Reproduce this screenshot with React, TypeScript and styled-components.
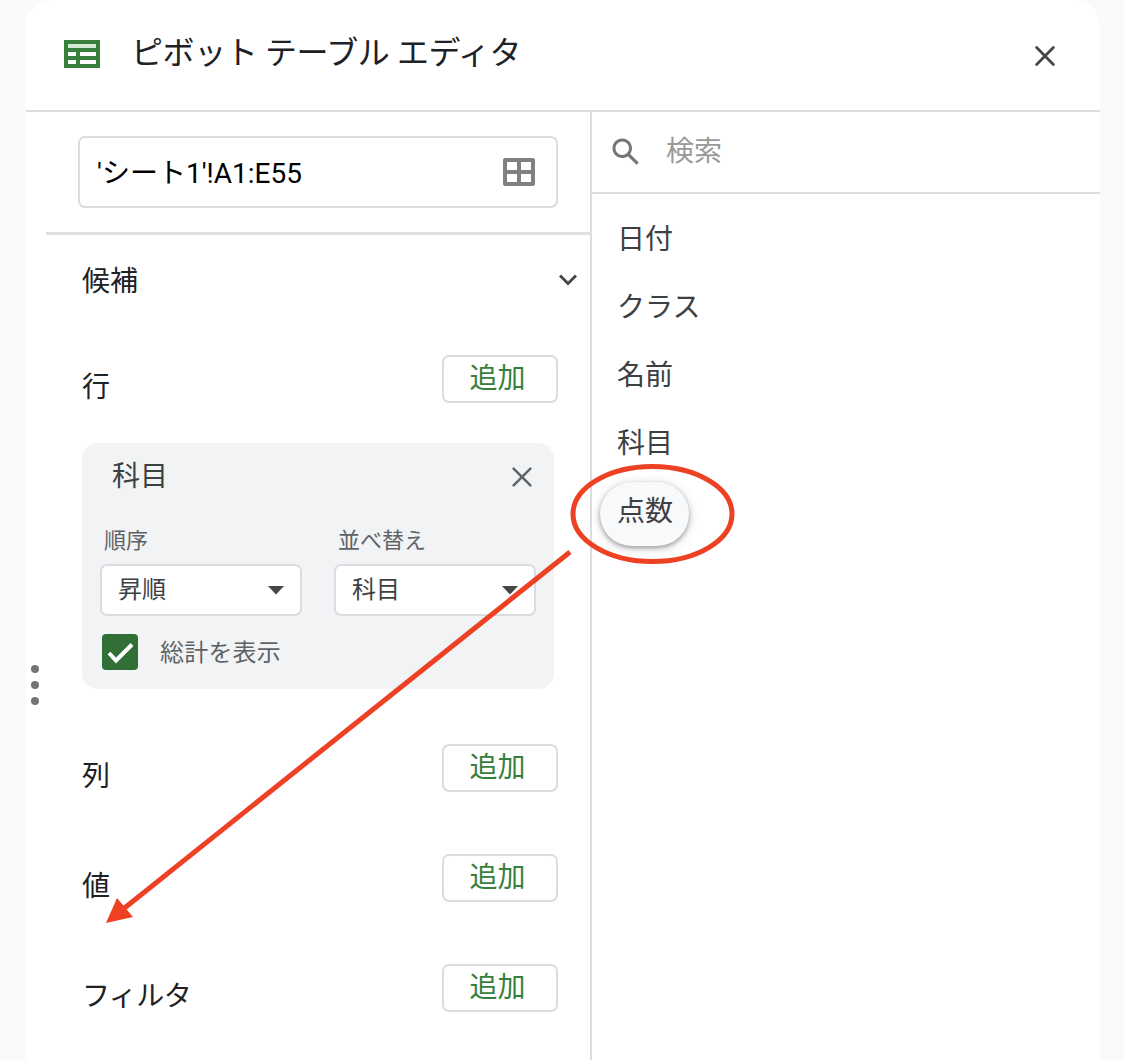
import React from 'react';
import styled, { createGlobalStyle } from 'styled-components';

const GlobalStyle = createGlobalStyle`
  *, *::before, *::after { box-sizing: border-box; }
  body {
    margin: 0;
    background: #f9fafc;
    font-family: Roboto, "Noto Sans CJK JP", sans-serif;
    color: #202124;
    overflow: hidden;
  }
`;

const Page = styled.div`
  position: relative;
  width: 1124px;
  height: 1060px;
  padding: 0 24px 0 26px;
  overflow: hidden;
`;

const Panel = styled.main`
  display: flex;
  flex-direction: column;
  height: 1060px;
  background: #fff;
  border-radius: 26px 26px 0 0;
`;

const Header = styled.header`
  display: flex;
  align-items: flex-start;
  height: 112px;
  padding: 0 44px 0 38px;
  border-bottom: 2px solid #dadce0;

  > svg:first-child { margin-top: 40px; }
  > svg:last-child { margin: 45px 0 0 auto; }
`;

const Title = styled.h1`
  margin: 31px 0 0 31px;
  font-size: 32px;
  font-weight: 400;
  line-height: 44px;
  letter-spacing: -0.4px;
  white-space: nowrap;
`;

const Body = styled.div`
  display: grid;
  grid-template-columns: 18px 546px 1fr;
  flex: 1;
`;

const Grip = styled.div`
  display: flex;
  flex-direction: column;
  align-items: center;
  gap: 8px;
  padding-top: 553px;
`;

const Dot = styled.span`
  width: 8px;
  height: 8px;
  border-radius: 50%;
  background: #757575;
`;

const Settings = styled.section`
  display: flex;
  flex-direction: column;
  padding-left: 2px;
  border-right: 2px solid #dadce0;
  width: 548px;
`;

const RangeArea = styled.div`
  height: 123px;
  padding: 24px 32px 0;
  border-bottom: 3px solid #e0e0e0;
`;

const RangeField = styled.div`
  display: flex;
  align-items: center;
  justify-content: space-between;
  width: 480px;
  height: 72px;
  padding: 0 21px 0 17px;
  border: 2px solid #dadce0;
  border-radius: 7px;
  font-size: 28px;
  line-height: 40px;
  color: #000;
`;

const RangeText = styled.span`
  padding-top: 4px;
`;

const Suggestions = styled.div`
  display: flex;
  align-items: center;
  justify-content: space-between;
  height: 90px;
  padding: 0 12px 0 36px;
  font-size: 28px;
  line-height: 40px;
`;

const SuggestionsName = styled.span`
  padding-top: 4px;
`;

const Zone = styled.div<{ $gap: number }>`
  display: flex;
  align-items: flex-start;
  justify-content: space-between;
  height: 48px;
  margin-top: ${(p) => p.$gap}px;
  padding: 0 32px 0 36px;
`;

const ZoneName = styled.span`
  padding-top: 13px;
  font-size: 28px;
  line-height: 40px;
  letter-spacing: -0.6px;
`;

const AddButton = styled.button`
  width: 116px;
  height: 48px;
  padding: 0 5px 0 0;
  border: 2px solid #dadce0;
  border-radius: 7px;
  background: #fff;
  color: #37803c;
  font: inherit;
  font-size: 28px;
  line-height: 40px;
`;

const Card = styled.article`
  width: 472px;
  height: 246px;
  margin: 40px 0 0 36px;
  padding: 13px 18px 0;
  border-radius: 16px;
  background: #f1f3f4;
  color: #3c4043;
`;

const CardHead = styled.div`
  display: flex;
  align-items: center;
  justify-content: space-between;
  height: 42px;
  padding: 0 3px 0 12px;
  font-size: 28px;
  line-height: 40px;
`;

const Fields = styled.div`
  display: flex;
  gap: 32px;
  margin-top: 27px;
`;

const Field = styled.label`
  display: flex;
  flex-direction: column;
  width: 202px;
`;

const FieldName = styled.span`
  height: 39px;
  padding-left: 4px;
  font-size: 22px;
  line-height: 32px;
  color: #5f6368;
`;

const Select = styled.span`
  display: flex;
  align-items: center;
  justify-content: space-between;
  height: 52px;
  padding: 0 16px;
  border: 2px solid #dadce0;
  border-radius: 7px;
  background: #fff;
  font-size: 24px;
  line-height: 36px;
`;

const TotalsRow = styled.div`
  display: flex;
  align-items: center;
  gap: 22px;
  height: 36px;
  margin: 18px 0 0 2px;
  font-size: 24px;
  line-height: 36px;
  color: #5f6368;
`;

const TotalsText = styled.span`
  padding-top: 2px;
  letter-spacing: 0.2px;
`;

const CheckBox = styled.span`
  display: flex;
  width: 36px;
  height: 36px;
  border-radius: 4px;
  background: #326f37;
`;

const FieldsPane = styled.aside`
  padding-left: 2px;
`;

const SearchBar = styled.div`
  display: flex;
  align-items: flex-start;
  height: 82px;
  padding: 22px 0 0 16px;
  border-bottom: 2px solid #dadce0;
`;

const SearchHint = styled.span`
  margin: -2px 0 0 22px;
  font-size: 28px;
  line-height: 40px;
  color: #999;
`;

const FieldList = styled.ul`
  display: flex;
  flex-direction: column;
  align-items: flex-start;
  gap: 4px;
  margin: 0;
  padding: 16px 0 0 8px;
  list-style: none;
`;

const FieldItem = styled.li<{ $lifted: boolean }>`
  height: 64px;
  padding: 10px 16px 0 17px;
  border-radius: 32px;
  background: ${(p) => (p.$lifted ? '#f8f9fa' : 'transparent')};
  box-shadow: ${(p) =>
    p.$lifted ? '0 2px 4px rgba(60,64,67,.42), 0 2px 8px 2px rgba(60,64,67,.15)' : 'none'};
  font-size: 28px;
  line-height: 40px;
  color: #3c4043;
`;

const Annotation = styled.svg`
  position: absolute;
  inset: 0;
  pointer-events: none;
`;

const PivotIcon = () => (
  <svg width="36" height="28" viewBox="0 0 36 28" shapeRendering="crispEdges">
    <path fill="#37803c" d="M0 0h36v28H0z" />
    <path fill="#d5e9d7" d="M4 4h28v4H4z" />
    <path fill="#fff" d="M4 12h8v4H4zM16 12h16v4H16zM4 20h8v4H4zM16 20h16v4H16z" />
  </svg>
);

const CloseIcon = ({ color, weight }: { color: string; weight: number }) => (
  <svg width="22" height="22" viewBox="0 0 22 22">
    <path d="M2.6 2.6l16.8 16.8M19.4 2.6L2.6 19.4" stroke={color} strokeWidth={weight} strokeLinecap="round" />
  </svg>
);

const GridIcon = () => (
  <svg width="32" height="28" viewBox="0 0 32 28">
    <path
      fill="#808080"
      fillRule="evenodd"
      d="M2 0h28a2 2 0 0 1 2 2v24a2 2 0 0 1-2 2H2a2 2 0 0 1-2-2V2a2 2 0 0 1 2-2zM4 4v8h10V4zM18 4v8h10V4zM4 16v8h10v-8zM18 16v8h10v-8z"
    />
  </svg>
);

const ChevronIcon = () => (
  <svg width="20" height="14" viewBox="0 0 20 14">
    <path d="M2 2.5l8 8 8-8" fill="none" stroke="#444746" strokeWidth="2.8" />
  </svg>
);

const CaretIcon = () => (
  <svg width="16" height="9" viewBox="0 0 16 9">
    <path d="M0 0h16L8 8.5z" fill="#444746" />
  </svg>
);

const SearchIcon = () => (
  <svg width="36" height="36" viewBox="0 0 24 24">
    <path
      fill="#757575"
      d="M20.49 19l-5.73-5.73C15.53 12.2 16 10.91 16 9.5 16 5.91 13.09 3 9.5 3S3 5.91 3 9.5 5.91 16 9.5 16c1.41 0 2.7-.47 3.77-1.24L19 20.49 20.49 19zM5 9.5C5 7.01 7.01 5 9.5 5S14 7.01 14 9.5 11.99 14 9.5 14 5 11.99 5 9.5z"
    />
  </svg>
);

const CheckIcon = () => (
  <svg width="36" height="36" viewBox="0 0 36 36">
    <path d="M7 19l7 7.5L30 10.5" fill="none" stroke="#fff" strokeWidth="4" />
  </svg>
);

const fields = ['日付', 'クラス', '名前', '科目', '点数'];
const sorts = [
  { name: '順序', value: '昇順' },
  { name: '並べ替え', value: '科目' },
];

const DropZone = ({ name, gap }: { name: string; gap: number }) => (
  <Zone $gap={gap}>
    <ZoneName>{name}</ZoneName>
    <AddButton>追加</AddButton>
  </Zone>
);

export default function App() {
  return (
    <Page lang="ja">
      <GlobalStyle />
      <Panel>
        <Header>
          <PivotIcon />
          <Title>ピボット テーブル エディタ</Title>
          <CloseIcon color="#444746" weight={2.8} />
        </Header>
        <Body>
          <Grip>
            <Dot />
            <Dot />
            <Dot />
          </Grip>
          <Settings>
            <RangeArea>
              <RangeField>
                <RangeText>'シート1'!A1:E55</RangeText>
                <GridIcon />
              </RangeField>
            </RangeArea>
            <Suggestions>
              <SuggestionsName>候補</SuggestionsName>
              <ChevronIcon />
            </Suggestions>
            <DropZone name="行" gap={30} />
            <Card>
              <CardHead>
                <span>科目</span>
                <CloseIcon color="#5f6368" weight={2.5} />
              </CardHead>
              <Fields>
                {sorts.map((s) => (
                  <Field key={s.name}>
                    <FieldName>{s.name}</FieldName>
                    <Select>
                      {s.value}
                      <CaretIcon />
                    </Select>
                  </Field>
                ))}
              </Fields>
              <TotalsRow>
                <CheckBox>
                  <CheckIcon />
                </CheckBox>
                <TotalsText>総計を表示</TotalsText>
              </TotalsRow>
            </Card>
            <DropZone name="列" gap={55} />
            <DropZone name="値" gap={62} />
            <DropZone name="フィルタ" gap={62} />
          </Settings>
          <FieldsPane>
            <SearchBar>
              <SearchIcon />
              <SearchHint>検索</SearchHint>
            </SearchBar>
            <FieldList>
              {fields.map((f) => (
                <FieldItem key={f} $lifted={f === '点数'}>
                  {f}
                </FieldItem>
              ))}
            </FieldList>
          </FieldsPane>
        </Body>
      </Panel>
      <Annotation width="1124" height="1060" viewBox="0 0 1124 1060">
        <ellipse cx="652.5" cy="514" rx="79.5" ry="47.5" fill="none" stroke="#ee4023" strokeWidth="5" />
        <path d="M570 552L122 910" stroke="#ee4023" strokeWidth="5" />
        <path d="M106 923L117 898L133 917z" fill="#ee4023" />
      </Annotation>
    </Page>
  );
}
